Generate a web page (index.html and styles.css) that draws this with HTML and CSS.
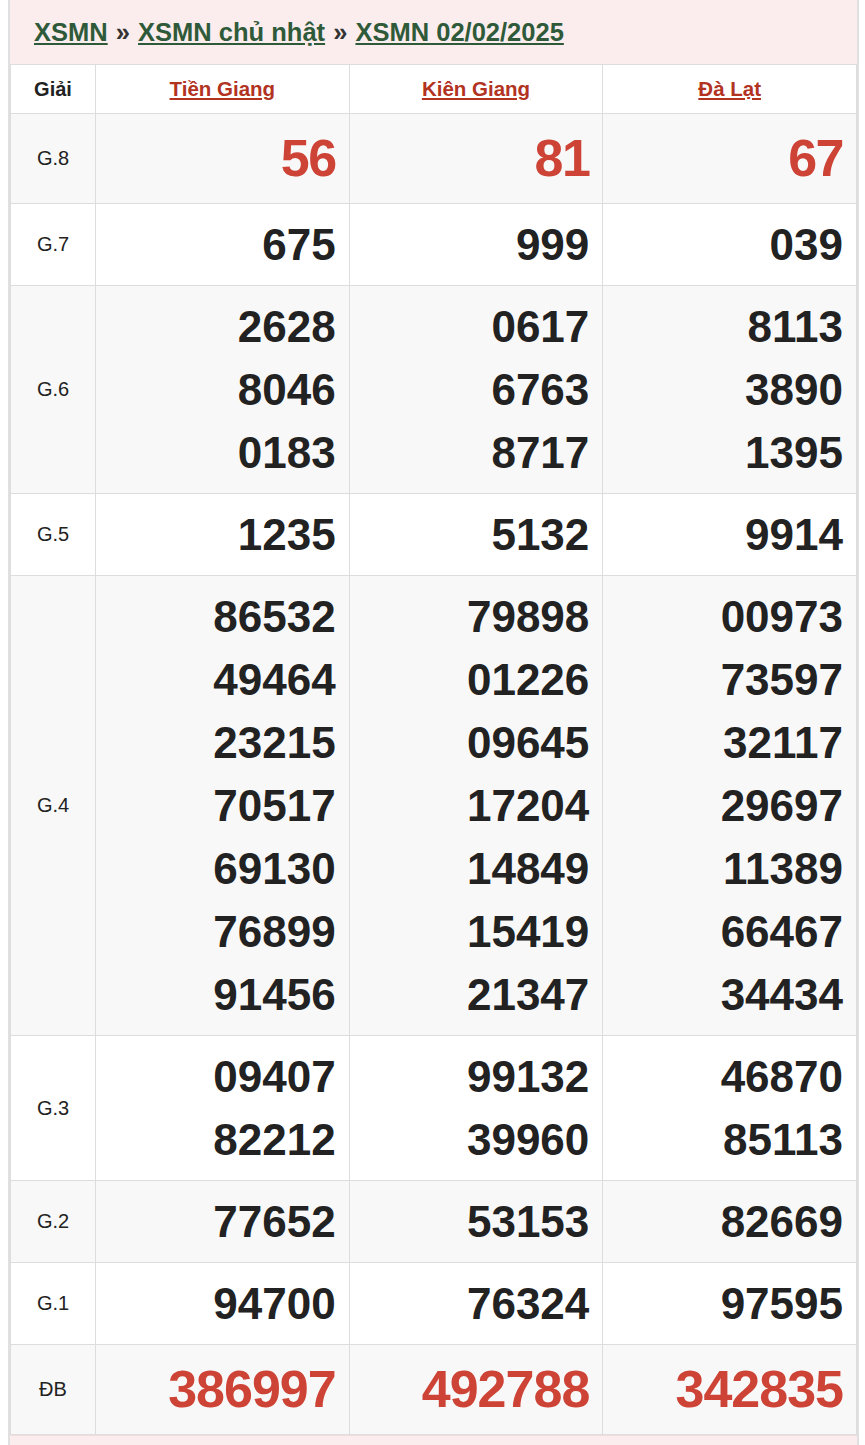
FILE: index.html
```html
<!DOCTYPE html>
<html lang="vi">
<head>
<meta charset="utf-8">
<title>XSMN 02/02/2025</title>
<link rel="stylesheet" href="styles.css">
</head>
<body>
<div class="box">
  <div class="crumbs">
    <a href="#">XSMN</a> <span class="sep">»</span> <a href="#">XSMN chủ nhật</a> <span class="sep">»</span> <a href="#">XSMN 02/02/2025</a>
  </div>
  <table class="kq">
    <colgroup><col class="c-giai"><col><col><col></colgroup>
    <thead>
      <tr>
        <th class="giai">Giải</th>
        <th><a href="#">Tiền Giang</a></th>
        <th><a href="#">Kiên Giang</a></th>
        <th><a href="#">Đà Lạt</a></th>
      </tr>
    </thead>
    <tbody>
      <tr class="alt g8">
        <td class="lbl">G.8</td>
        <td class="num red"><div>56</div></td>
        <td class="num red"><div>81</div></td>
        <td class="num red"><div>67</div></td>
      </tr>
      <tr>
        <td class="lbl">G.7</td>
        <td class="num"><div>675</div></td>
        <td class="num"><div>999</div></td>
        <td class="num"><div>039</div></td>
      </tr>
      <tr class="alt">
        <td class="lbl">G.6</td>
        <td class="num"><div>2628</div><div>8046</div><div>0183</div></td>
        <td class="num"><div>0617</div><div>6763</div><div>8717</div></td>
        <td class="num"><div>8113</div><div>3890</div><div>1395</div></td>
      </tr>
      <tr>
        <td class="lbl">G.5</td>
        <td class="num"><div>1235</div></td>
        <td class="num"><div>5132</div></td>
        <td class="num"><div>9914</div></td>
      </tr>
      <tr class="alt">
        <td class="lbl">G.4</td>
        <td class="num"><div>86532</div><div>49464</div><div>23215</div><div>70517</div><div>69130</div><div>76899</div><div>91456</div></td>
        <td class="num"><div>79898</div><div>01226</div><div>09645</div><div>17204</div><div>14849</div><div>15419</div><div>21347</div></td>
        <td class="num"><div>00973</div><div>73597</div><div>32117</div><div>29697</div><div>11389</div><div>66467</div><div>34434</div></td>
      </tr>
      <tr>
        <td class="lbl">G.3</td>
        <td class="num"><div>09407</div><div>82212</div></td>
        <td class="num"><div>99132</div><div>39960</div></td>
        <td class="num"><div>46870</div><div>85113</div></td>
      </tr>
      <tr class="alt">
        <td class="lbl">G.2</td>
        <td class="num"><div>77652</div></td>
        <td class="num"><div>53153</div></td>
        <td class="num"><div>82669</div></td>
      </tr>
      <tr>
        <td class="lbl">G.1</td>
        <td class="num"><div>94700</div></td>
        <td class="num"><div>76324</div></td>
        <td class="num"><div>97595</div></td>
      </tr>
      <tr class="alt db">
        <td class="lbl">ĐB</td>
        <td class="num red"><div>386997</div></td>
        <td class="num red"><div>492788</div></td>
        <td class="num red"><div>342835</div></td>
      </tr>
    </tbody>
  </table>
  <div class="foot"></div>
</div>
</body>
</html>
```

FILE: styles.css
```css
html, body {
  margin: 0;
  padding: 0;
  background: #ffffff;
}
body {
  padding: 0 6px 0 8px;
  font-family: "Liberation Sans", Arial, sans-serif;
  color: #222222;
}
.box {
  border-left: 2px solid #e0e0e0;
  border-right: 2px solid #e0e0e0;
  background: #fbeded;
}
.crumbs {
  padding: 16px 0 16px 24px;
  line-height: 32px;
  font-size: 25.5px;
  font-weight: bold;
  color: #333333;
  white-space: nowrap;
}
.crumbs a {
  color: #2f5a3a;
  text-decoration: underline;
}
.crumbs .sep {
  color: #333333;
  margin: 0 1px;
}
.kq {
  width: 100%;
  border-collapse: collapse;
  table-layout: fixed;
  background: #ffffff;
}
.kq .c-giai {
  width: 85px;
}
.kq th,
.kq td {
  border: 1px solid #dddddd;
  padding: 9px 13px 9px 8px;
}
.kq th {
  font-size: 20.5px;
  font-weight: bold;
  line-height: 30px;
  text-align: center;
  background: #ffffff;
  padding-left: 8px;
  padding-right: 8px;
}
.kq th a {
  color: #b2331f;
  text-decoration: underline;
}
.kq th.giai {
  color: #222222;
  font-size: 20px;
}
.kq tr.alt td {
  background: #f8f8f8;
}
.kq td.lbl {
  text-align: center;
  font-size: 20px;
  color: #222222;
  padding-left: 4px;
  padding-right: 4px;
}
.kq td.num {
  text-align: right;
  font-size: 44px;
  font-weight: bold;
  line-height: 63px;
  color: #222222;
}
.kq td.red {
  color: #cd4336;
}
.kq tr.g8 td.num {
  font-size: 52px;
  line-height: 71px;
  letter-spacing: -1.5px;
}
.kq tr.db td.num {
  font-size: 52px;
  line-height: 71px;
  letter-spacing: -1px;
}
.foot {
  height: 16px;
  border-top: 1px solid #f2dede;
}
```
